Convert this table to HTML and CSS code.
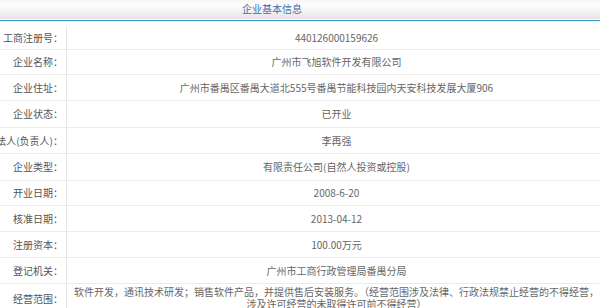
FILE: index.html
```html
<!DOCTYPE html>
<html lang="zh-CN">
<head>
<meta charset="utf-8">
<title>企业基本信息</title>
<link rel="stylesheet" href="styles.css">
</head>
<body>
<div class="panel">
  <div class="panel-head"><span class="panel-title">企业基本信息</span></div>
  <div class="info">
    <div class="row h24"><div class="label">工商注册号：</div><div class="value">440126000159626</div></div>
    <div class="row h25"><div class="label">企业名称：</div><div class="value">广州市飞旭软件开发有限公司</div></div>
    <div class="row h26"><div class="label">企业住址：</div><div class="value">广州市番禺区番禺大道北555号番禺节能科技园内天安科技发展大厦906</div></div>
    <div class="row h27"><div class="label">企业状态：</div><div class="value">已开业</div></div>
    <div class="row h26"><div class="label">法人(负责人)：</div><div class="value">李再强</div></div>
    <div class="row h27"><div class="label">企业类型：</div><div class="value">有限责任公司(自然人投资或控股)</div></div>
    <div class="row h25"><div class="label">开业日期：</div><div class="value">2008-6-20</div></div>
    <div class="row h26"><div class="label">核准日期：</div><div class="value">2013-04-12</div></div>
    <div class="row h26"><div class="label">注册资本：</div><div class="value">100.00万元</div></div>
    <div class="row h26"><div class="label">登记机关：</div><div class="value">广州市工商行政管理局番禺分局</div></div>
    <div class="row last"><div class="label">经营范围：</div><div class="value">软件开发，通讯技术研发；销售软件产品，并提供售后安装服务。（经营范围涉及法律、行政法规禁止经营的不得经营，<br>涉及许可经营的未取得许可前不得经营）</div></div>
  </div>
</div>
</body>
</html>
```
FILE: styles.css
```css
html, body {
  margin: 0;
  padding: 0;
  background: #fff;
  overflow: hidden;
}
body {
  width: 600px;
  height: 308px;
  font-family: "Noto Sans CJK SC", "Noto Sans", sans-serif;
  font-size: 10px;
  color: #666;
}
.panel {
  width: 606px;
}
.panel-head {
  height: 18px;
  background: linear-gradient(#f7f7f7, #fdfdfd 30%, #e6e6e6);
  border-bottom: 1px solid #f3e3e0;
  box-shadow: 0 1px 0 #fff, 0 2px 0 #3d9ccf, 0 3px 0 #f6e8e6;
  display: flex;
  align-items: center;
  padding-left: 242px;
}
.panel-title {
  color: #3a6db2;
  line-height: 12px;
}
.info {
  margin-top: 7px;
}
.row {
  box-sizing: border-box;
  display: grid;
  grid-template-columns: 67px 1fr;
  border-bottom: 1px solid #ebebeb;
}
.h24 { height: 24px; }
.h25 { height: 25px; }
.h26 { height: 26px; }
.h27 { height: 27px; }
.row.last {
  height: 40px;
  border-bottom: 0;
}
.label {
  display: flex;
  justify-content: flex-end;
  align-items: center;
  white-space: nowrap;
  padding-right: 3px;
  border-right: 1px solid #e6e6e6;
  color: #555;
  line-height: 12px;
}
.value {
  display: flex;
  align-items: center;
  justify-content: center;
  text-align: center;
  padding: 0 2px;
  line-height: 12px;
}
.last .label, .last .value {
  align-items: flex-start;
}
.last .value {
  padding-top: 2px;
}
.last .label {
  padding-top: 9px;
}
```
